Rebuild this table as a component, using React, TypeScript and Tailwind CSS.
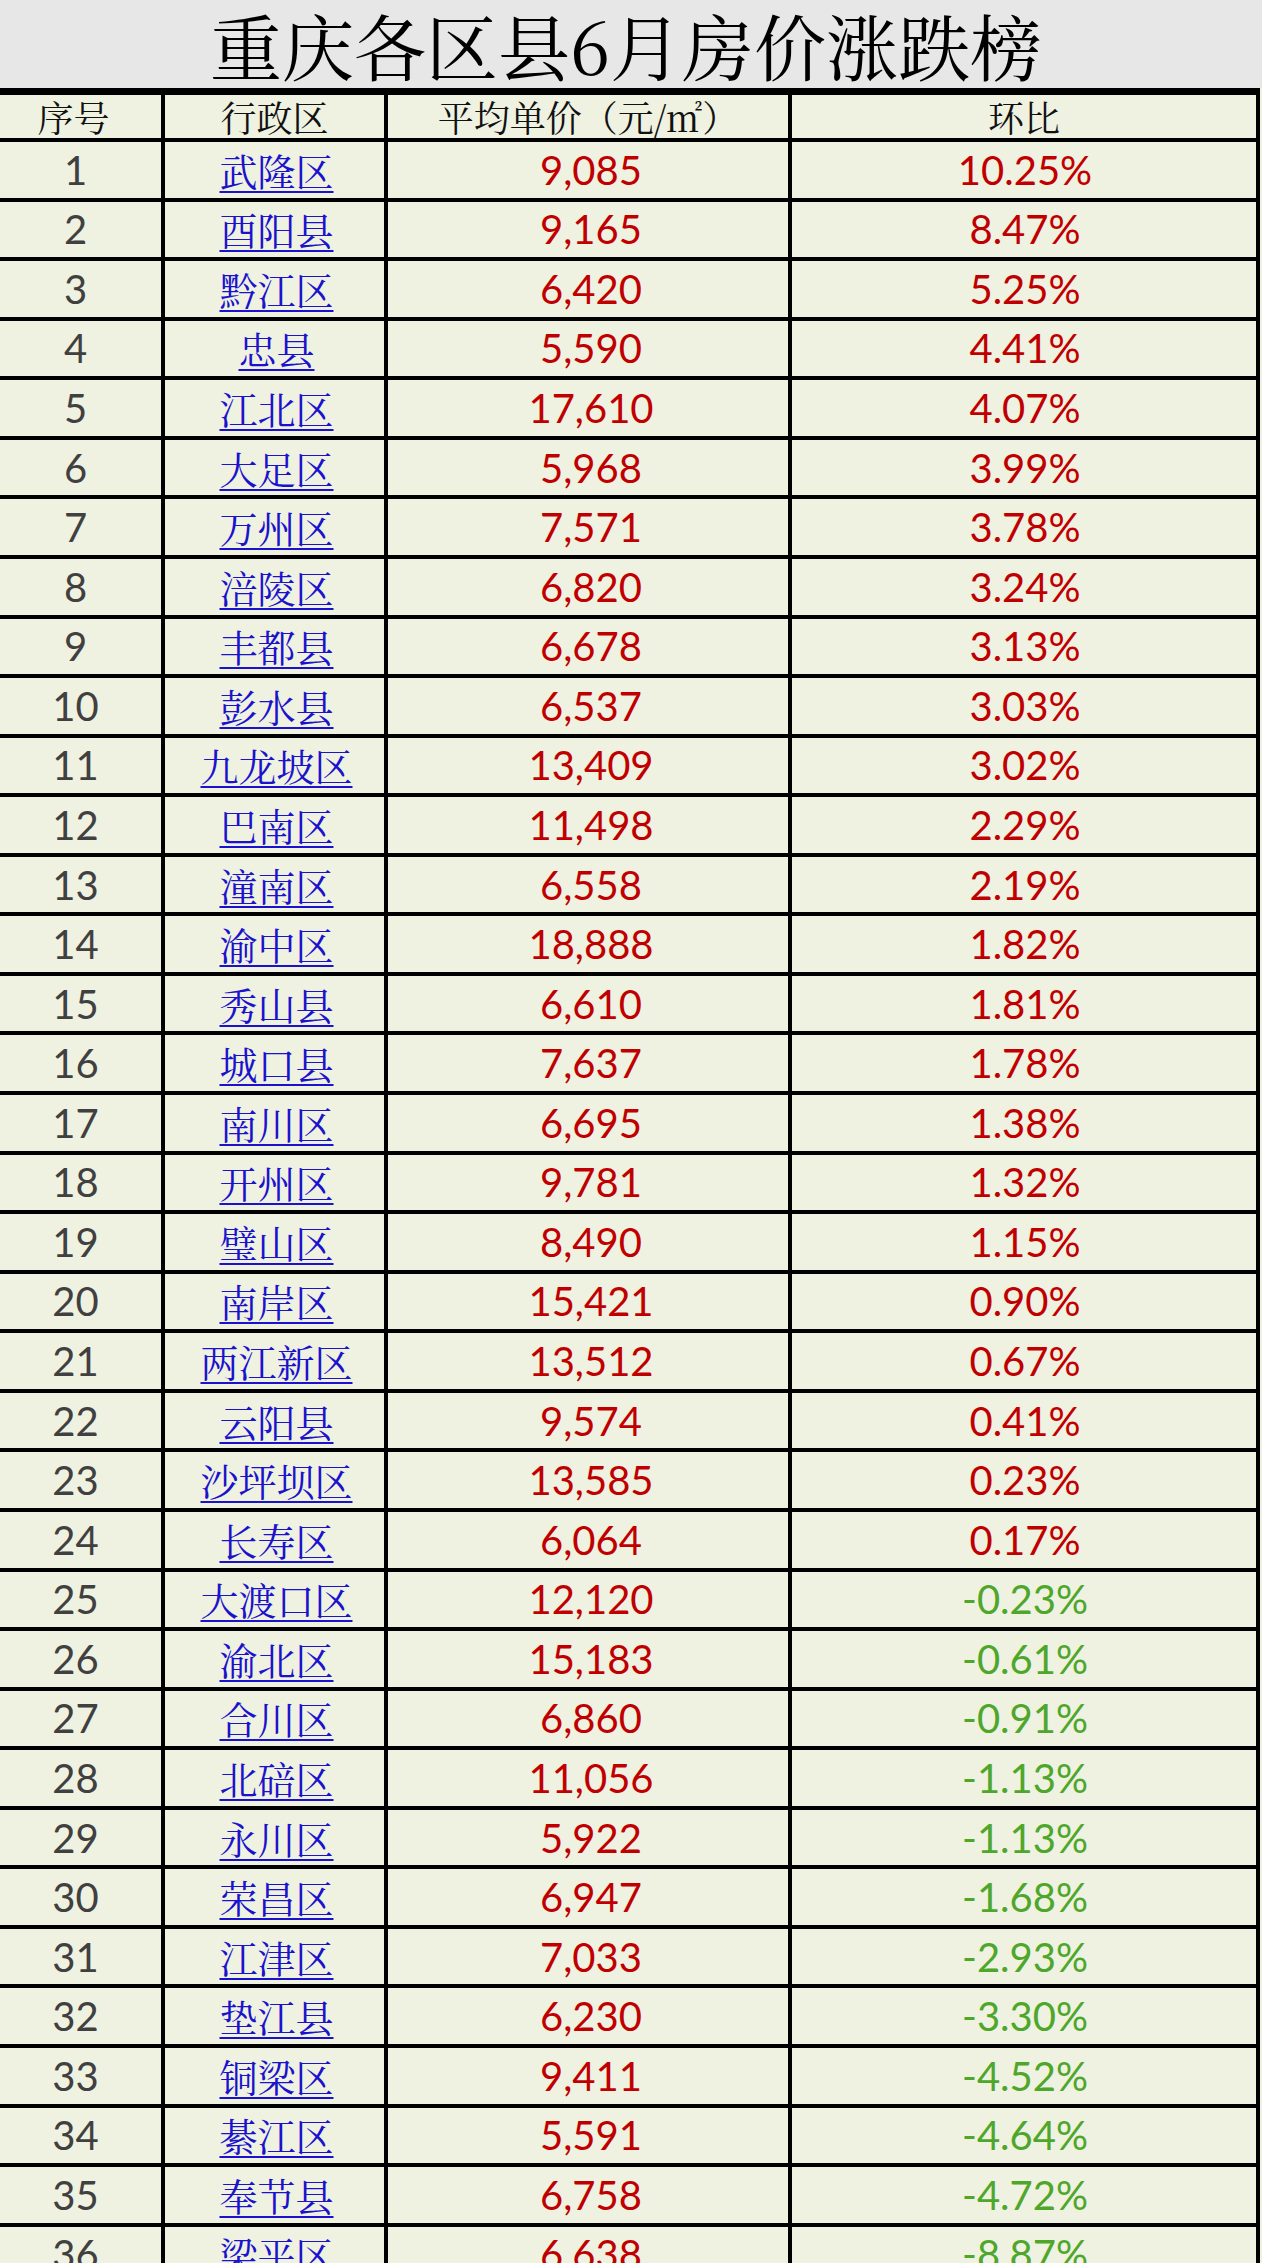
import React from "react";

type Row = [string, string, string];

const ROWS: Row[] = [
  ["武隆区", "9,085", "10.25%"],
  ["酉阳县", "9,165", "8.47%"],
  ["黔江区", "6,420", "5.25%"],
  ["忠县", "5,590", "4.41%"],
  ["江北区", "17,610", "4.07%"],
  ["大足区", "5,968", "3.99%"],
  ["万州区", "7,571", "3.78%"],
  ["涪陵区", "6,820", "3.24%"],
  ["丰都县", "6,678", "3.13%"],
  ["彭水县", "6,537", "3.03%"],
  ["九龙坡区", "13,409", "3.02%"],
  ["巴南区", "11,498", "2.29%"],
  ["潼南区", "6,558", "2.19%"],
  ["渝中区", "18,888", "1.82%"],
  ["秀山县", "6,610", "1.81%"],
  ["城口县", "7,637", "1.78%"],
  ["南川区", "6,695", "1.38%"],
  ["开州区", "9,781", "1.32%"],
  ["璧山区", "8,490", "1.15%"],
  ["南岸区", "15,421", "0.90%"],
  ["两江新区", "13,512", "0.67%"],
  ["云阳县", "9,574", "0.41%"],
  ["沙坪坝区", "13,585", "0.23%"],
  ["长寿区", "6,064", "0.17%"],
  ["大渡口区", "12,120", "-0.23%"],
  ["渝北区", "15,183", "-0.61%"],
  ["合川区", "6,860", "-0.91%"],
  ["北碚区", "11,056", "-1.13%"],
  ["永川区", "5,922", "-1.13%"],
  ["荣昌区", "6,947", "-1.68%"],
  ["江津区", "7,033", "-2.93%"],
  ["垫江县", "6,230", "-3.30%"],
  ["铜梁区", "9,411", "-4.52%"],
  ["綦江区", "5,591", "-4.64%"],
  ["奉节县", "6,758", "-4.72%"],
  ["梁平区", "6,638", "-8.87%"],
];

const serif = "font-['Noto_Serif_CJK_SC','Noto_Sans_CJK_SC',serif]";
const num = "font-['Lato','Noto_Sans',sans-serif]";

export default function App() {
  return (
    <div className="h-[2263px] w-[1262px] overflow-hidden bg-[#eff1e1]">
      {/* Title */}
      <div className="flex h-[88px] items-center justify-center bg-[#e7e7e7]">
        <h1 className={`${serif} text-[72px] leading-none text-black pr-[10px]`}>
          重庆各区县6月房价涨跌榜
        </h1>
      </div>

      {/* Table */}
      <div className="w-[1260px] border-t-[7px] border-r-[4px] border-black">
        {/* Header */}
        <div className={`${serif} flex h-[47px] border-b-[4px] border-black text-[36px] leading-none text-[#111]`}>
          <div className="flex w-[165px] items-center justify-center border-r-[4px] border-black pr-[14px]">
            序号
          </div>
          <div className="flex w-[223px] items-center justify-center border-r-[4px] border-black">
            行政区
          </div>
          <div className="flex w-[404px] items-center justify-center border-r-[4px] border-black">
            平均单价（元/㎡）
          </div>
          <div className="flex flex-1 items-center justify-center">环比</div>
        </div>

        {ROWS.map(([name, price, ratio], i) => {
          const down = ratio.startsWith("-");
          return (
            <div key={i} className="flex h-[59.57px] border-b-[4px] border-black">
              <div
                className={`${num} flex w-[165px] items-center justify-center border-r-[4px] border-black pr-[10px] text-[40px] text-[#404040]`}
              >
                {i + 1}
              </div>
              <div className="flex w-[223px] items-center justify-center border-r-[4px] border-black pl-[4px]">
                <span
                  className={`${serif} text-[38px] leading-none text-[#1a12cc] underline decoration-[2px] underline-offset-[5px]`}
                >
                  {name}
                </span>
              </div>
              <div
                className={`${num} flex w-[404px] items-center justify-center border-r-[4px] border-black pl-[6px] text-[40px] text-[#c00000]`}
              >
                {price}
              </div>
              <div
                className={`${num} flex flex-1 items-center justify-center pl-[2px] text-[40px] ${
                  down ? "text-[#4ea72a]" : "text-[#c00000]"
                }`}
              >
                {ratio}
              </div>
            </div>
          );
        })}
      </div>
    </div>
  );
}
